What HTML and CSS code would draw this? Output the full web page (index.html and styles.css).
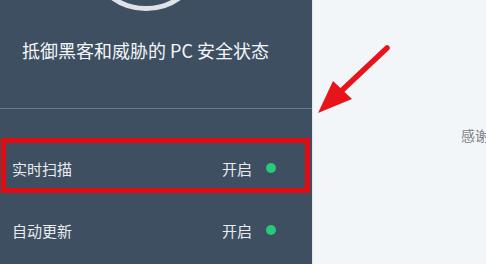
FILE: index.html
```html
<!DOCTYPE html>
<html lang="zh-CN">
<head>
<meta charset="utf-8">
<title>安全状态</title>
<link rel="stylesheet" href="styles.css">
</head>
<body>
<div class="page">
  <aside class="sidebar">
    <div class="ring"></div>
    <h1 class="title">抵御黑客和威胁的 PC 安全状态</h1>
    <div class="divider"></div>
    <div class="row row-marked">
      <span class="label">实时扫描</span>
      <span class="status">开启<span class="dot"></span></span>
    </div>
    <div class="row row-next">
      <span class="label">自动更新</span>
      <span class="status">开启<span class="dot"></span></span>
    </div>
  </aside>
  <main class="main">
    <p class="thanks">感谢您使用</p>
  </main>
  <svg class="arrow" width="486" height="264" viewBox="0 0 486 264">
    <line x1="387" y1="48" x2="337" y2="95" stroke="#e8141b" stroke-width="5.5" stroke-linecap="round"/>
    <polygon points="318,113 333,81 352,99" fill="#e8141b"/>
  </svg>
</div>
</body>
</html>
```

FILE: styles.css
```css
html, body {
  margin: 0;
  padding: 0;
}
body {
  font-family: "Noto Sans CJK SC", "Noto Sans", sans-serif;
  overflow: hidden;
}
.page {
  position: relative;
  display: flex;
  width: 486px;
  height: 264px;
  overflow: hidden;
}
.sidebar {
  width: 312px;
  flex: 0 0 312px;
  background: #3e4f62;
  display: flex;
  flex-direction: column;
}
.ring {
  width: 120px;
  height: 120px;
  box-sizing: border-box;
  border: 5px solid #dfe3e7;
  border-radius: 50%;
  margin-top: -109px;
  margin-left: 86px;
}
.title {
  margin: 26px 0 0 0;
  padding-left: 22px;
  font-size: 18px;
  line-height: 26px;
  font-weight: normal;
  color: #f4f6f8;
  white-space: nowrap;
}
.divider {
  height: 1px;
  margin-top: 45px;
  background: #6a7b8d;
}
.row {
  display: flex;
  align-items: center;
  justify-content: space-between;
  height: 62px;
  padding: 0 36px 0 12px;
  box-sizing: border-box;
  color: #e8ebee;
  font-size: 15px;
}
.row-marked {
  margin-top: 29px;
  margin-left: 1px;
  width: 309px;
  height: 55px;
  border: 5px solid #e30b12;
  padding: 5px 29px 0 6px;
}
.row-next {
  margin-top: 6px;
}
.status {
  display: flex;
  align-items: center;
  gap: 14px;
}
.dot {
  width: 10px;
  height: 10px;
  border-radius: 50%;
  background: #27c97a;
}
.main {
  flex: 1;
  background: #f3f6f9;
  border-left: 1px solid #e1e6eb;
  overflow: hidden;
}
.thanks {
  margin: 124px 0 0 148px;
  font-size: 14px;
  line-height: 22px;
  color: #7b7f84;
  white-space: nowrap;
}
.arrow {
  position: absolute;
  left: 0;
  top: 0;
  pointer-events: none;
}
```
